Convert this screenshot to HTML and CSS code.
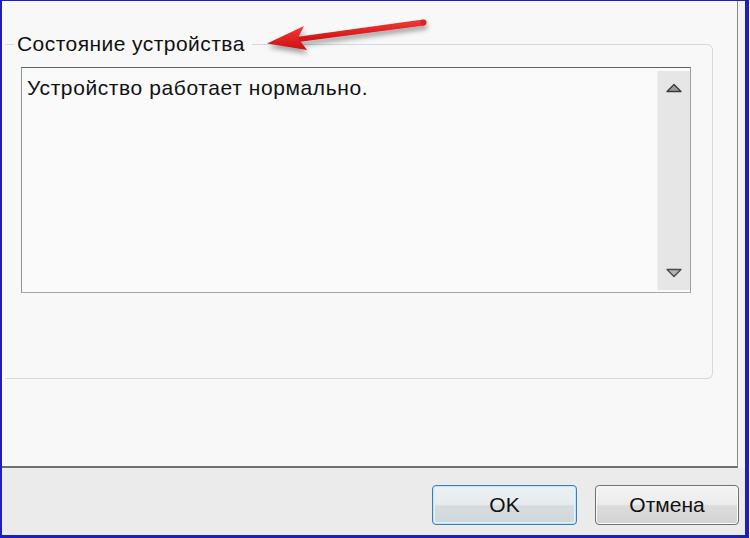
FILE: index.html
```html
<!DOCTYPE html>
<html lang="ru">
<head>
<meta charset="utf-8">
<title>Состояние устройства</title>
<link rel="stylesheet" href="styles.css">
</head>
<body>
<div class="window">
  <div class="page">
    <fieldset class="group">
      <legend class="group-title">Состояние устройства</legend>
      <div class="textbox">
        <div class="textbox-text">Устройство работает нормально.</div>
        <div class="scrollbar">
          <svg class="arrow-btn" width="16" height="10" viewBox="0 0 16 10">
            <path d="M1 8.5 L8 1.5 L15 8.5 Z" fill="#9a9a9a" stroke="#3a3a3a" stroke-width="1.3" stroke-linejoin="round"/>
          </svg>
          <svg class="arrow-btn" width="16" height="10" viewBox="0 0 16 10">
            <path d="M1 1.5 L8 8.5 L15 1.5 Z" fill="#b4b4b4" stroke="#4a4a4a" stroke-width="1.3" stroke-linejoin="round"/>
          </svg>
        </div>
      </div>
    </fieldset>
  </div>
  <div class="buttons">
    <button class="btn btn-default">OK</button>
    <button class="btn">Отмена</button>
  </div>
  <svg class="callout" width="750" height="80" viewBox="0 0 750 80">
    <defs>
      <filter id="sh" x="-20%" y="-50%" width="140%" height="250%">
        <feDropShadow dx="1" dy="4" stdDeviation="2.5" flood-color="#000" flood-opacity="0.35"/>
      </filter>
      <linearGradient id="rg" x1="0" y1="0" x2="0" y2="1">
        <stop offset="0" stop-color="#f23a3a"/>
        <stop offset="1" stop-color="#cc1010"/>
      </linearGradient>
    </defs>
    <g filter="url(#sh)">
      <path d="M296 37 L423 19.5 L424.5 25.5 L298 42 Z" fill="url(#rg)"/>
      <circle cx="423.5" cy="22.5" r="3" fill="#d82020"/>
      <path d="M267 43.5 L304 26 L298 38 L307 50 Z" fill="url(#rg)"/>
    </g>
  </svg>
</div>
</body>
</html>
```
FILE: styles.css
```css
* { box-sizing: border-box; }
html, body { margin: 0; padding: 0; background: #ffffff; }
body {
  font-family: "Liberation Sans", Arial, sans-serif;
  font-size: 21px;
  color: #111;
}
.window {
  position: relative;
  width: 749px;
  height: 538px;
  border-style: solid;
  border-color: #1e1eb8;
  border-width: 1px 4px 3px 2px;
  background: #f2f2f2;
  display: flex;
  flex-direction: column;
}
.page {
  width: 736px;
  height: 467px;
  background: #f8f8f8;
  border-right: 1px solid #8a8a8a;
  border-bottom: 2px solid #707070;
  padding-top: 31px;
}
.group {
  margin: 0 0 0 3px;
  width: 708px;
  height: 347px;
  border: 1px solid #d3d9dc;
  border-left: none;
  border-radius: 0 6px 6px 0;
  padding: 11px 0 0 16px;
  min-width: 0;
}
.group-title {
  margin-left: -7px;
  padding: 0 7px 0 3px;
  line-height: 24px;
  letter-spacing: 0.45px;
  color: #111;
}
.textbox {
  width: 670px;
  height: 226px;
  display: flex;
  background: #fafafa;
  border-style: solid;
  border-width: 1px;
  border-color: #56636d #9aa1a6 #a8a8a8 #8c979c;
}
.textbox-text {
  flex: 1;
  padding: 8px 0 0 5px;
  line-height: 24px;
  letter-spacing: 0.6px;
  white-space: nowrap;
}
.scrollbar {
  width: 33px;
  margin: 3px 0 2px;
  background: #e6e6e6;
  border-left: 1px solid #eeeeee;
  display: flex;
  flex-direction: column;
  justify-content: space-between;
  align-items: center;
  padding: 12px 0 12px 0;
}
.arrow-btn { display: block; }
.buttons {
  flex: 1;
  background: #ebebeb;
  display: flex;
  justify-content: flex-end;
  align-items: flex-start;
  gap: 18px;
  padding: 17px 6px 0 0;
}
.btn {
  width: 144px;
  height: 40px;
  font-family: "Liberation Sans", Arial, sans-serif;
  font-size: 21px;
  color: #111;
  border: 1px solid #6f6f6f;
  border-radius: 4px;
  background: linear-gradient(#f3f3f3 0%, #ececec 48%, #dcdcdc 52%, #d2d2d2 100%);
  box-shadow: inset 0 0 0 1px #fbfbfb;
  padding: 0;
}
.btn-default {
  width: 145px;
  border-color: #3c7fb1;
  box-shadow: inset 0 0 0 1px #bfe4f8, inset 0 0 0 2px #e4f2fa;
  background: linear-gradient(#ecf1f3 0%, #e6ebee 48%, #d6dde1 52%, #d0d6da 100%);
}
.callout {
  position: absolute;
  left: -2px;
  top: -1px;
  pointer-events: none;
}
```
